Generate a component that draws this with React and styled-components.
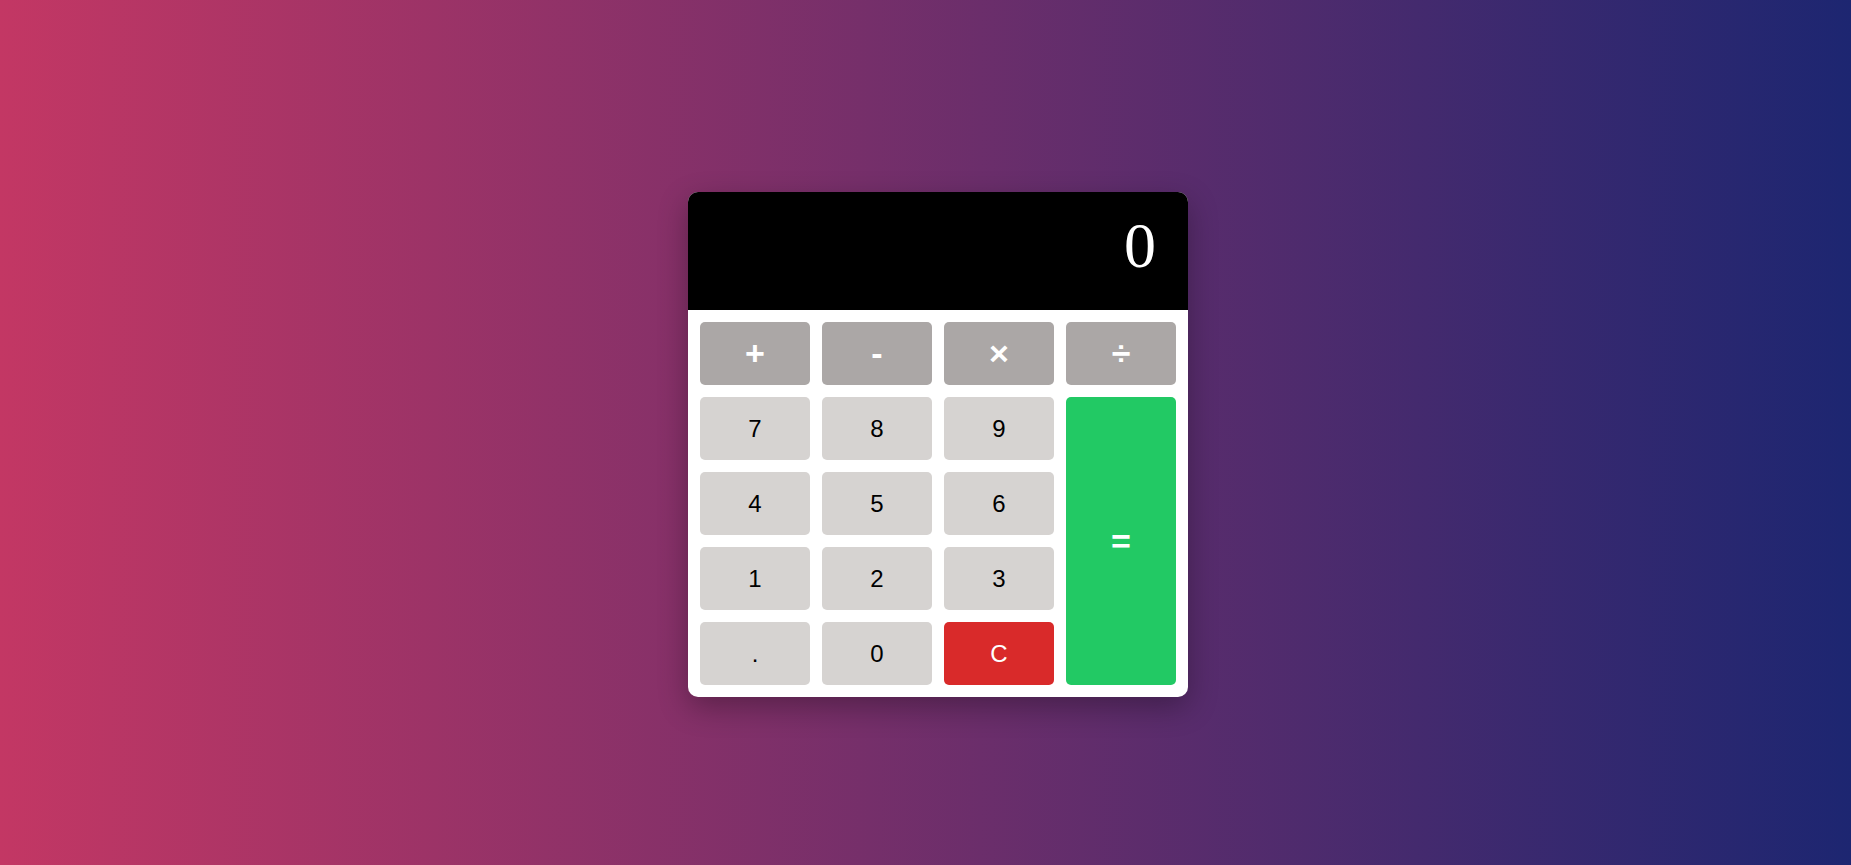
import React, { useState } from 'react';
import styled, { createGlobalStyle } from 'styled-components';

const GlobalStyle = createGlobalStyle`
	* {
		box-sizing: border-box;
	}
	html, body {
		margin: 0;
		padding: 0;
		height: 100%;
	}
	body {
		font-family: "Liberation Serif", "Times New Roman", serif;
	}
`;

const Page = styled.div`
	min-height: 100vh;
	display: flex;
	align-items: center;
	justify-content: center;
	padding: 24px 0 0 25px;
	background: linear-gradient(to right, #c33764, #1d2671);
`;

const Calculator = styled.div`
	width: 500px;
	background: #fff;
	border-radius: 10px;
	overflow: hidden;
	box-shadow: 0 10px 30px rgba(0, 0, 0, 0.3);
`;

const Display = styled.div`
	height: 118px;
	background: #000;
	color: #fff;
	display: flex;
	align-items: center;
	justify-content: flex-end;
	padding: 0 32px 10px;
	font-family: "Liberation Serif", "Times New Roman", serif;
	font-size: 64px;
`;

const Keys = styled.div`
	display: grid;
	grid-template-columns: repeat(4, 1fr);
	grid-auto-rows: 63px;
	gap: 12px;
	padding: 12px;
`;

const colors = {
	op: { bg: '#aba7a6', fg: '#fff' },
	num: { bg: '#d6d3d1', fg: '#000' },
	clear: { bg: '#d92a2a', fg: '#fff' },
	equal: { bg: '#22c964', fg: '#fff' },
};

const Key = styled.button`
	border: none;
	border-radius: 5px;
	font-family: "Liberation Sans", Arial, sans-serif;
	font-size: ${(p) => (p.$kind === 'op' || p.$kind === 'equal' ? '34px' : '24px')};
	font-weight: ${(p) => (p.$kind === 'op' || p.$kind === 'equal' ? 700 : 400)};
	background: ${(p) => colors[p.$kind].bg};
	color: ${(p) => colors[p.$kind].fg};
	cursor: pointer;
	grid-row: ${(p) => (p.$tall ? 'span 4' : 'auto')};
	&:hover {
		filter: brightness(0.95);
	}
`;

export default function App() {
	const [value, setValue] = useState('0');

	const press = (k) => {
		if (k === 'C') return setValue('0');
		if (k === '=') {
			try {
				const expr = value.replace(/×/g, '*').replace(/÷/g, '/');
				// eslint-disable-next-line no-new-func
				const res = Function(`return (${expr})`)();
				setValue(String(res));
			} catch (e) {
				setValue('Error');
			}
			return;
		}
		setValue((v) => (v === '0' && k !== '.' ? k : v + k));
	};

	const layout = [
		['+', 'op'], ['-', 'op'], ['×', 'op'], ['÷', 'op'],
		['7', 'num'], ['8', 'num'], ['9', 'num'], ['=', 'equal'],
		['4', 'num'], ['5', 'num'], ['6', 'num'],
		['1', 'num'], ['2', 'num'], ['3', 'num'],
		['.', 'num'], ['0', 'num'], ['C', 'clear'],
	];

	return (
		<>
			<GlobalStyle />
			<Page>
				<Calculator>
					<Display>{value}</Display>
					<Keys>
						{layout.map(([k, kind]) => (
							<Key key={k} $kind={kind} $tall={k === '='} onClick={() => press(k)}>
								{k}
							</Key>
						))}
					</Keys>
				</Calculator>
			</Page>
		</>
	);
}
